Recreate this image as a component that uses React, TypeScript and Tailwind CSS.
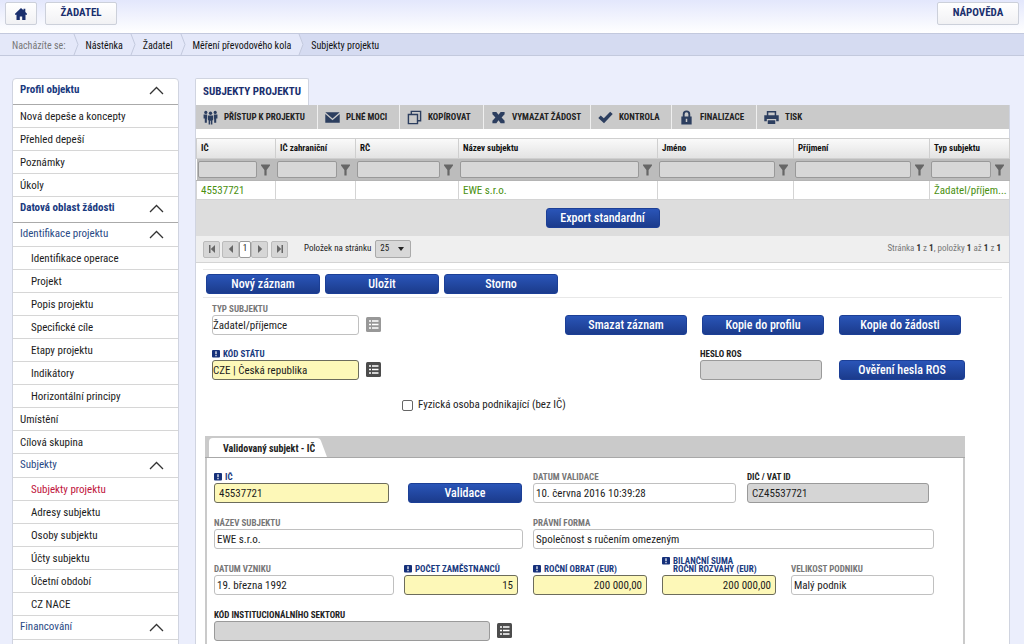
import React from 'react';

interface FieldProps {
  id: string;
  label: string;
  value?: string;
  kind?: 'plain' | 'required' | 'disabled';
  className: string;
  inputClassName?: string;
}

interface MenuItem {
  label: string;
  type: 'section' | 'group' | 'item' | 'sub';
  active?: boolean;
}

const MENU: MenuItem[] = [
  { label: 'Profil objektu', type: 'section' },
  { label: 'Nová depeše a koncepty', type: 'item' },
  { label: 'Přehled depeší', type: 'item' },
  { label: 'Poznámky', type: 'item' },
  { label: 'Úkoly', type: 'item' },
  { label: 'Datová oblast žádosti', type: 'section' },
  { label: 'Identifikace projektu', type: 'group' },
  { label: 'Identifikace operace', type: 'sub' },
  { label: 'Projekt', type: 'sub' },
  { label: 'Popis projektu', type: 'sub' },
  { label: 'Specifické cíle', type: 'sub' },
  { label: 'Etapy projektu', type: 'sub' },
  { label: 'Indikátory', type: 'sub' },
  { label: 'Horizontální principy', type: 'sub' },
  { label: 'Umístění', type: 'item' },
  { label: 'Cílová skupina', type: 'item' },
  { label: 'Subjekty', type: 'group' },
  { label: 'Subjekty projektu', type: 'sub', active: true },
  { label: 'Adresy subjektu', type: 'sub' },
  { label: 'Osoby subjektu', type: 'sub' },
  { label: 'Účty subjektu', type: 'sub' },
  { label: 'Účetní období', type: 'sub' },
  { label: 'CZ NACE', type: 'sub' },
  { label: 'Financování', type: 'group' },
];

const COLUMNS = [
  { label: 'IČ', value: '45537721', width: 'w-[79px]' },
  { label: 'IČ zahraniční', value: '', width: 'w-[80px]' },
  { label: 'RČ', value: '', width: 'w-[103px]' },
  { label: 'Název subjektu', value: 'EWE s.r.o.', width: 'w-[199px]' },
  { label: 'Jméno', value: '', width: 'w-[136px]' },
  { label: 'Příjmení', value: '', width: 'w-[136px]' },
  { label: 'Typ subjektu', value: 'Žadatel/příjem...', width: 'w-[80px]' },
];

const TOOLS = [
  { label: 'Přístup k projektu', icon: 'people', width: 'w-[122px]' },
  { label: 'Plné moci', icon: 'mail', width: 'w-[82px]' },
  { label: 'Kopírovat', icon: 'copy', width: 'w-[84px]' },
  { label: 'Vymazat žádost', icon: 'cross', width: 'w-[107px]' },
  { label: 'Kontrola', icon: 'check', width: 'w-[81px]' },
  { label: 'Finalizace', icon: 'lock', width: 'w-[85px]' },
  { label: 'Tisk', icon: 'print', width: 'w-[80px]' },
];

const ToolIcon = ({ name }: { name: string }) => {
  const shapes: { [key: string]: React.ReactNode } = {
    people: (
      <>
        <circle cx="3" cy="2.6" r="1.7" />
        <circle cx="13" cy="2.6" r="1.7" />
        <circle cx="8" cy="3.4" r="1.8" />
        <path d="M.6 4.800h3.800v4.400H4.100V13.500H1.900V9H.6zM15.400 4.800h-3.800v4.400h.3v4.300h2.200V9h1.300zM5.200 5.800h5.600v5H10V15.500H8.400V11.500h-.8v4H6v-4.700h-.8z" />
      </>
    ),
    mail: <path d="M.3 2.500h15.400L8 9zM.3 4.300 8 11l7.700-6.700V13.500H.3z" />,
    copy: (
      <g fill="none" stroke="currentColor" strokeWidth="1.5">
        <path d="M1.500 4.800h9.700v9.700H1.500z" />
        <path d="M4.600 4.800V1.500h9.900v9.900h-3.300" />
      </g>
    ),
    cross: <path d="M1.500 2h4.200L8 5l2.300-3h4.200v2.500L11.300 8l3.200 3.500V14h-4.200L8 11l-2.300 3H1.500v-2.500L4.700 8 1.500 4.500z" />,
    check: <path d="M.3 8.400 2.900 5.800l3.300 3L13 1.800l2.700 2.400L6.400 14.200z" />,
    lock: <path fillRule="evenodd" d="M2.500 7H4V4.500a4 4 0 0 1 8 0V7h1.500v8.500h-11zM6 7h4V4.500a2 2 0 0 0-4 0zM7.200 9.200v3.600h1.600V9.200z" />,
    print: <path fillRule="evenodd" d="M3 1h10v4.500h2.700V12H13V9.500H3V12H.3V5.500H3zM4.600 2.600v3h6.800v-3zM4 11h8v4H4z" />,
  };
  return (
    <svg className="h-[15px] w-[15px] shrink-0 text-[#2c3e5f]" viewBox="0 0 16 16" fill="currentColor">
      {shapes[name]}
    </svg>
  );
};

const FilterIcon = () => (
  <svg className="h-3 w-[9px] shrink-0" viewBox="0 0 9 12" fill="#666">
    <path d="M0 .5h9v1L5.600 6v5.500H3.400V6L0 1.500z" />
  </svg>
);

const Chevron = () => (
  <svg className="h-[9px] w-[15px]" viewBox="0 0 15 9" fill="none" stroke="#333" strokeWidth="1.3">
    <path d="M1 8 7.500 1.500 14 8" />
  </svg>
);

const RequiredMark = () => (
  <svg className="h-2 w-2 shrink-0" viewBox="0 0 8 8">
    <rect width="8" height="7.500" rx="1" fill="#15307a" />
    <path d="M3.400 1.200h1.200v3H3.400zM3.400 5h1.200v1.200H3.400z" fill="#fff" />
  </svg>
);

const ListButton = ({ muted = false }: { muted?: boolean }) => (
  <button type="button" aria-label="Vybrat ze seznamu" className="mb-[3px] cursor-pointer">
    <svg className="block h-[15px] w-[15px]" viewBox="0 0 15 15">
      <rect width="15" height="15" rx="1.5" fill={muted ? '#989898' : '#4c4c4c'} />
      <path d="M3 4h2M3 7.500h2M3 11h2M6 4h6.500M6 7.500h6.500M6 11h6.500" stroke="#fff" strokeWidth="1.5" />
    </svg>
  </button>
);

const BlueButton = ({ children, className }: { children: React.ReactNode; className: string }) => (
  <button
    type="button"
    className={`h-5 cursor-pointer rounded-[3px] border border-[#1c3f96] bg-linear-to-b from-[#2a55b8] to-[#1b3b8c] text-xs leading-4 font-medium text-white ${className}`}
  >
    {children}
  </button>
);

const Field: React.FC<FieldProps> = ({ id, label, value = '', kind = 'plain', className, inputClassName = 'px-0.5' }) => {
  const getLabelColor = () => {
    if (kind === 'required') return 'text-[#1a3a80]';
    if (kind === 'disabled') return 'text-[#222]';
    return 'text-[#777]';
  };

  const getInputStyle = () => {
    if (kind === 'required') return 'border-[#6c6c5c] bg-[#fdf8b8]';
    if (kind === 'disabled') return 'border-[#9a9a9a] bg-[#d5d5d5]';
    return 'border-[#c0c0c0] bg-white';
  };

  return (
    <div className={`flex flex-col justify-end ${className}`}>
      <label htmlFor={id} className={`flex gap-[3px] pb-0.5 text-[9px] leading-[8px] font-bold whitespace-pre-line uppercase ${getLabelColor()}`}>
        {kind === 'required' && <RequiredMark />}
        {label}
      </label>
      <input
        id={id}
        defaultValue={value}
        className={`h-5 w-full rounded-[3px] border text-[11px] text-[#1c1c1c] ${inputClassName} ${getInputStyle()}`}
      />
    </div>
  );
};

const Sidebar = () => (
  <nav className="w-[167px] shrink-0 self-start rounded-t-sm border border-[#d0d4e0] bg-white pb-6 text-[11px]">
    {MENU.map((item) => {
      if (item.type === 'section' || item.type === 'group') {
        return (
          <button
            key={item.label}
            type="button"
            className={`flex w-full cursor-pointer items-center justify-between border-b pr-[14px] pl-[7px] ${
              item.type === 'section'
                ? 'h-[26px] border-[#aaa] pb-0.5 font-bold text-[#1a3a80]'
                : 'h-6 border-[#d6d6d6] text-[#2a4a85]'
            }`}
          >
            {item.label}
            <Chevron />
          </button>
        );
      }
      return (
        <a
          key={item.label}
          href="#"
          className={`flex h-[23px] items-center border-b border-[#d6d6d6] pt-0.5 ${
            item.type === 'sub' ? 'pl-[18px]' : 'pl-[7px]'
          } ${item.active ? 'text-[#c0143c]' : 'text-[#1c1c1c]'}`}
        >
          {item.label}
        </a>
      );
    })}
  </nav>
);

const CrumbArrow = ({ last = false }: { last?: boolean }) => (
  <svg className="h-[21px] w-5 shrink-0" viewBox="0 0 20 21" fill="none">
    {last && <path d="M8 0h12v21H8l4-10.500z" fill="#d5dbf1" />}
    <path d="m8 0 4 10.500L8 21" stroke="#c3c9dd" />
  </svg>
);

const Breadcrumbs = () => {
  const items = ['Nástěnka', 'Žadatel', 'Měření převodového kola'];
  return (
    <div className="flex h-[23px] shrink-0 border-y border-[#c3c9dd] bg-[#e4e8f9] text-[10px] text-[#111]">
      <span className="flex items-center pt-px pl-3 text-[#777]">Nacházíte se:</span>
      {items.map((item) => (
        <React.Fragment key={item}>
          <CrumbArrow />
          <a href="#" className="flex items-center pt-px">
            {item}
          </a>
        </React.Fragment>
      ))}
      <CrumbArrow last />
      <span className="flex flex-1 items-center bg-[#d5dbf1] pt-px">Subjekty projektu</span>
    </div>
  );
};

const SubjectTable = () => (
  <table className="mt-[9px] w-full table-fixed border-collapse text-left text-[11px]">
    <thead>
      <tr className="h-5 bg-linear-to-b from-[#fafafa] to-[#e2e2e2] text-[9px]">
        {COLUMNS.map((col) => (
          <th key={col.label} className={`border border-[#cfcfcf] pl-1 font-bold text-[#111] ${col.width}`}>
            {col.label}
          </th>
        ))}
      </tr>
      <tr className="h-[22px] bg-[#bcbcbc]">
        {COLUMNS.map((col) => (
          <td key={col.label} className="border-y border-[#b4b4b4]">
            <div className="flex items-center gap-1 pr-1.5 pl-px">
              <input
                aria-label={`Filtr ${col.label}`}
                className="h-[17px] w-full min-w-0 rounded-xs border border-[#999] bg-[#d7d7d7]"
              />
              <FilterIcon />
            </div>
          </td>
        ))}
      </tr>
    </thead>
    <tbody>
      <tr className="h-[19px] text-[#4a9010]">
        {COLUMNS.map((col) => (
          <td key={col.label} className="border border-[#d4d4d4] pt-px pl-1 leading-4 whitespace-nowrap">
            {col.value}
          </td>
        ))}
      </tr>
    </tbody>
  </table>
);

const PagerButton = ({ path, label }: { path: string; label: string }) => (
  <button
    type="button"
    aria-label={label}
    className="flex h-[17px] w-[17px] cursor-pointer items-center justify-center rounded-xs border border-[#bbb] bg-[#d6d6d6]"
  >
    <svg className="h-2 w-2" viewBox="0 0 8 8" fill="#666">
      <path d={path} />
    </svg>
  </button>
);

const Pager = () => (
  <div className="flex h-[27px] items-center border-b border-[#d4d4d4] bg-[#efefef] pr-2 pl-[7px] text-[9px] text-[#222]">
    <div className="flex items-center">
      <PagerButton label="První" path="M1 0h1.500v8H1zM7 0v8L2.800 4z" />
      <div className="flex pr-[3px] pl-0.5">
        <PagerButton label="Předchozí" path="M6 0v8L1.800 4z" />
        <button type="button" className="h-[17px] w-3 rounded-xs border border-[#999] bg-white">
          1
        </button>
        <PagerButton label="Další" path="M2 0v8l4.200-4z" />
      </div>
      <PagerButton label="Poslední" path="M5.500 0H7v8H5.500zM1 0v8l4.200-4z" />
    </div>
    <label htmlFor="page-size" className="pr-1 pl-4">
      Položek na stránku
    </label>
    <div className="relative">
      <select id="page-size" className="h-[18px] w-9 appearance-none rounded-xs border border-[#aaa] bg-[#d8d8d8] pl-1">
        <option>25</option>
        <option>50</option>
      </select>
      <svg className="pointer-events-none absolute top-[7px] right-[7px] h-1 w-1.5" viewBox="0 0 6 4" fill="#222">
        <path d="M0 0h6L3 4z" />
      </svg>
    </div>
    <span className="ml-auto text-[#777]">
      Stránka <b className="text-[#333]">1</b> z <b className="text-[#333]">1</b>, položky <b className="text-[#333]">1</b> až{' '}
      <b className="text-[#333]">1</b> z <b className="text-[#333]">1</b>
    </span>
  </div>
);

const ValidatedSubject = () => (
  <section className="mr-11 ml-[9px]">
    {/* Tab strip */}
    <div className="flex h-[22px] items-end border-b border-[#a8a8a8] bg-[#cacaca] pl-1">
      <div className="flex h-[19px] items-center rounded-tl-sm bg-white pt-px pl-[14px] text-[10px] font-bold text-[#222]">
        Validovaný subjekt - IČ
      </div>
      <svg className="h-[19px] w-3" viewBox="0 0 12 19">
        <path d="M0 0h2q3 0 4 3l6 16H0z" fill="#fff" />
      </svg>
    </div>

    <div className="flex flex-col gap-4 border-x-2 border-[#cacaca] pt-[15px] pr-[29px] pb-5 pl-[7px]">
      <div className="flex items-end">
        <Field id="ic" label="IČ" value="45537721" kind="required" className="w-[175px]" inputClassName="px-1" />
        <BlueButton className="ml-[19px] w-[114px]">Validace</BlueButton>
        <Field id="datum-validace" label="Datum validace" value="10. června 2016 10:39:28" className="ml-[11px] w-[203px]" />
        <Field id="dic" label="DIČ / VAT ID" value="CZ45537721" kind="disabled" className="mr-[5px] ml-[11px] flex-1" inputClassName="px-1" />
      </div>
      <div className="flex items-end gap-[10px]">
        <Field id="nazev" label="Název subjektu" value="EWE s.r.o." className="w-[309px]" />
        <Field id="forma" label="Právní forma" value="Společnost s ručením omezeným" className="flex-1" />
      </div>
      <div className="flex h-[30px] items-end gap-[15px]">
        <div className="flex w-[304px] items-end gap-[10px]">
          <Field id="vznik" label="Datum vzniku" value="19. března 1992" className="flex-1" />
          <Field id="zamestnanci" label="Počet zaměstnanců" value="15" kind="required" className="w-[114px]" inputClassName="px-1 text-right" />
        </div>
        <Field id="obrat" label="Roční obrat (EUR)" value="200 000,00" kind="required" className="w-[114px]" inputClassName="px-1 text-right" />
        <Field
          id="bilance"
          label={'Bilanční suma\nroční rozvahy (EUR)'}
          value="200 000,00"
          kind="required"
          className="w-[114px]"
          inputClassName="px-1 text-right"
        />
        <Field id="velikost" label="Velikost podniku" value="Malý podnik" className="flex-1" />
      </div>
      <div className="flex items-end gap-[7px]">
        <Field id="sektor" label="Kód institucionálního sektoru" kind="disabled" className="w-[276px]" />
        <ListButton />
      </div>
    </div>
  </section>
);

const App = () => (
  <div className="flex h-screen flex-col overflow-hidden bg-[#ebeefc] font-['Roboto_Condensed','Liberation_Sans_Narrow',Roboto,sans-serif]">
    <header className="flex h-[33px] shrink-0 items-start gap-2 bg-linear-to-b from-[#e3e7fc] to-white px-[5px] pt-0.5 text-[11px] font-bold text-[#1a2f6e]">
      <button
        type="button"
        aria-label="Domů"
        className="flex h-[23px] w-8 cursor-pointer items-center justify-center rounded-xs border border-[#ccd0da] bg-linear-to-b from-white to-[#f1f1f4]"
      >
        <svg className="h-3 w-3" viewBox="0 0 12 12" fill="currentColor">
          <path d="M6 0 8.500 2.300V.8h1.800v3.200L12 5.700v1.100h-1.500V12H7.200V8.500H4.800V12H1.500V6.800H0V5.700z" />
        </svg>
      </button>
      <button type="button" className="h-[23px] w-[72px] cursor-pointer rounded-xs border border-[#ccd0da] bg-linear-to-b from-white to-[#f1f1f4]">
        ŽADATEL
      </button>
      <button type="button" className="ml-auto h-[23px] w-[82px] cursor-pointer rounded-xs border border-[#ccd0da] bg-linear-to-b from-white to-[#f1f1f4]">
        NÁPOVĚDA
      </button>
    </header>
    <Breadcrumbs />

    <div className="flex items-start gap-4 pt-[22px] pr-[14px] pl-3">
      <Sidebar />
      <main className="min-w-0 flex-1">
        <h1 className="flex h-[27px] w-[114px] items-center justify-center rounded-t-xs border border-b-0 border-[#d0d4e0] bg-white text-[11px] font-bold text-[#1a2f6e]">
          SUBJEKTY PROJEKTU
        </h1>
        <div className="border-x border-[#d0d4e0] bg-white">
          <div className="flex h-6 bg-[#cacaca]">
            {TOOLS.map((tool) => (
              <button
                key={tool.label}
                type="button"
                className={`flex cursor-pointer items-center gap-1.5 border-r border-[#efefef] pt-px pl-[7px] text-[9px] font-bold whitespace-nowrap text-[#222] uppercase last:border-r-0 ${tool.width}`}
              >
                <ToolIcon name={tool.icon} />
                {tool.label}
              </button>
            ))}
          </div>

          <SubjectTable />
          <div className="flex h-9 items-center justify-center bg-[#ddd]">
            <BlueButton className="w-[114px]">Export standardní</BlueButton>
          </div>
          <Pager />

          {/* Record actions */}
          <div className="mx-[7px] mt-1.5 flex h-[29px] items-center gap-[5px] border-y border-[#e8e8e8] pl-[3px]">
            <BlueButton className="w-[114px]">Nový záznam</BlueButton>
            <BlueButton className="w-[114px]">Uložit</BlueButton>
            <BlueButton className="w-[114px]">Storno</BlueButton>
          </div>

          <form className="flex flex-col gap-[15px] pt-[7px] pr-11 pl-4">
            <div className="flex items-end gap-[7px]">
              <Field id="typ" label="Typ subjektu" value="Žadatel/příjemce" className="w-[147px]" inputClassName="px-0" />
              <ListButton muted />
              <div className="ml-auto flex gap-[15px] pr-1">
                <BlueButton className="w-[122px]">Smazat záznam</BlueButton>
                <BlueButton className="w-[122px]">Kopie do profilu</BlueButton>
                <BlueButton className="w-[122px]">Kopie do žádosti</BlueButton>
              </div>
            </div>
            <div className="flex items-end gap-[7px]">
              <Field id="stat" label="Kód státu" value="CZE | Česká republika" kind="required" className="w-[147px]" inputClassName="px-0" />
              <ListButton />
              <div className="ml-auto flex items-end gap-[17px]">
                <Field id="heslo" label="Heslo ROS" kind="disabled" className="w-[122px]" />
                <BlueButton className="w-[126px]">Ověření hesla ROS</BlueButton>
              </div>
            </div>
          </form>
          <label className="mt-[17px] mb-[23px] ml-[206px] flex h-4 w-fit items-center gap-[5px] text-[11px] text-[#222]">
            <input type="checkbox" className="h-[11px] w-[11px] appearance-none rounded-xs border border-[#666] bg-white" />
            Fyzická osoba podnikající (bez IČ)
          </label>

          <ValidatedSubject />
        </div>
      </main>
    </div>
  </div>
);

export default App;
